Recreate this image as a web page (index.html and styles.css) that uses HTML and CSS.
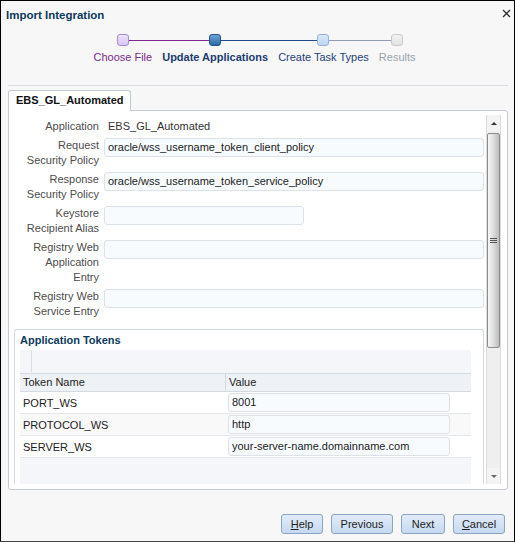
FILE: index.html
```html
<!DOCTYPE html>
<html>
<head>
<meta charset="utf-8">
<title>Import Integration</title>
<link rel="stylesheet" href="styles.css">
</head>
<body>
<div class="dialog">
  <div class="header">
    <div class="title">Import Integration</div>
    <svg class="close" width="9" height="9" viewBox="0 0 9 9"><path d="M1 1L8 8M8 1L1 8" stroke="#333" stroke-width="1.4" fill="none"/></svg>
  </div>

  <div class="train">
    <div class="step s1"><div class="node"></div><div class="slabel">Choose File</div></div>
    <div class="step s2"><div class="node"></div><div class="slabel">Update Applications</div></div>
    <div class="step s3"><div class="node"></div><div class="slabel">Create Task Types</div></div>
    <div class="step s4"><div class="node"></div><div class="slabel">Results</div></div>
  </div>

  <div class="sep"></div>

  <div class="tabs"><div class="tab">EBS_GL_Automated</div></div>

  <div class="panel">
    <div class="content">
      <div class="form">
        <div class="lbl">Application</div>
        <div class="val">EBS_GL_Automated</div>

        <div class="lbl">Request<br>Security Policy</div>
        <div><div class="input">oracle/wss_username_token_client_policy</div></div>

        <div class="lbl">Response<br>Security Policy</div>
        <div><div class="input">oracle/wss_username_token_service_policy</div></div>

        <div class="lbl">Keystore<br>Recipient Alias</div>
        <div><div class="input short"></div></div>

        <div class="lbl">Registry Web<br>Application<br>Entry</div>
        <div><div class="input"></div></div>

        <div class="lbl">Registry Web<br>Service Entry</div>
        <div><div class="input"></div></div>
      </div>

      <div class="tokens">
        <div class="tokens-title">Application Tokens</div>
        <div class="tbl">
          <div class="toolbar"><div class="tb-sep"></div></div>
          <div class="thead">
            <div class="th">Token Name</div>
            <div class="th th2">Value</div>
          </div>
          <div class="tr">
            <div class="td">PORT_WS</div>
            <div class="td2"><div class="cell-input">8001</div></div>
          </div>
          <div class="tr alt">
            <div class="td">PROTOCOL_WS</div>
            <div class="td2"><div class="cell-input">http</div></div>
          </div>
          <div class="tr">
            <div class="td">SERVER_WS</div>
            <div class="td2"><div class="cell-input">your-server-name.domainname.com</div></div>
          </div>
          <div class="filler"></div>
        </div>
      </div>
    </div>

    <div class="vscroll">
      <div class="sbtn"><span class="tri-up"></span></div>
      <div class="track">
        <div class="thumb">
          <svg width="7" height="7" viewBox="0 0 7 7"><path d="M0 1.5H7M0 3.5H7M0 5.5H7" stroke="#555" stroke-width="1" fill="none"/></svg>
        </div>
      </div>
      <div class="sbtn"><span class="tri-down"></span></div>
    </div>
  </div>

  <div class="footer">
    <button class="btn b-help"><u>H</u>elp</button>
    <button class="btn b-prev">Previous</button>
    <button class="btn b-next">Next</button>
    <button class="btn b-cancel"><u>C</u>ancel</button>
  </div>
</div>
</body>
</html>
```

FILE: styles.css
```css
html, body {
  margin: 0;
  padding: 0;
  background: #ffffff;
}

body {
  font-family: "Liberation Sans", Arial, sans-serif;
  font-size: 11px;
  color: #333;
}

.dialog {
  width: 515px;
  height: 542px;
  box-sizing: border-box;
  border: 1px solid #000;
  border-bottom-color: #444;
  background: #f7f7f7;
  display: flex;
  flex-direction: column;
  overflow: hidden;
}

/* header */
.header {
  height: 27px;
  display: flex;
  align-items: center;
  justify-content: space-between;
  padding: 0 3px 0 5px;
  flex: none;
}

.title {
  font-weight: bold;
  font-size: 11.5px;
  color: #0d3a5c;
}

.close {
  margin-top: -3px;
}

/* train */
.train {
  display: flex;
  justify-content: center;
  margin-top: 6px;
  padding-right: 6px;
  flex: none;
}

.step {
  position: relative;
  display: flex;
  flex-direction: column;
  align-items: center;
  padding: 0 5px;
}

.step::before,
.step::after {
  content: "";
  position: absolute;
  top: 6px;
  height: 1px;
}

.step::before { left: 0; right: 50%; }
.step::after { left: 50%; right: 0; }

.s1::before, .s4::after { display: none; }
.s1::after, .s2::before { background: #7d2a8c; }
.s2::after, .s3::before { background: #1c4a8a; }
.s3::after, .s4::before { background: #8e9db3; }

.node {
  position: relative;
  z-index: 1;
  width: 12px;
  height: 12px;
  box-sizing: border-box;
  border-radius: 3px;
  border: 1px solid #a78bd0;
  background: linear-gradient(#ece4fa, #d6c6f1);
}

.s2 .node {
  border-color: #1f558f;
  background: linear-gradient(#6ea3d6, #2f6aa6);
}

.s3 .node {
  border-color: #93b4d9;
  background: linear-gradient(#dbe9f8, #bcd6f2);
}

.s4 .node {
  border-color: #cacaca;
  background: linear-gradient(#f2f2f2, #e2e2e2);
}

.slabel {
  margin-top: 4px;
  line-height: 14px;
  white-space: nowrap;
}

.s1 .slabel { color: #7b2a88; }
.s2 .slabel { color: #1b3e70; font-weight: bold; }
.s3 .slabel { color: #1f3f78; }
.s4 .slabel { color: #9aa3ad; }

.sep {
  margin: 21px 6px 0 7px;
  height: 1px;
  background: #d9dde2;
  flex: none;
}

/* tabs */
.tabs {
  margin: 4px 6px 0 7px;
  display: flex;
  flex: none;
}

.tab {
  position: relative;
  z-index: 1;
  height: 21px;
  margin-bottom: -1px;
  box-sizing: border-box;
  border: 1px solid #c3cbd5;
  border-bottom: none;
  border-radius: 3px 3px 0 0;
  background: #fff;
  padding: 0 6px 0 7px;
  line-height: 19px;
  font-weight: bold;
  color: #111;
}

/* panel */
.panel {
  margin: 0 6px 0 7px;
  height: 380px;
  box-sizing: border-box;
  border: 1px solid #c3cbd5;
  border-radius: 0 3px 3px 3px;
  background: #fff;
  padding: 4px 6px 5px 0;
  display: flex;
  flex: none;
}

.content {
  flex: 1;
  overflow: hidden;
}

.form {
  display: grid;
  grid-template-columns: 90px 1fr;
  column-gap: 5px;
  row-gap: 4px;
  padding: 4px 2px 0 0;
}

.lbl {
  text-align: right;
  line-height: 15px;
  color: #4d4d4d;
}

.val {
  line-height: 15px;
  padding-left: 4px;
  color: #333;
}

.input {
  height: 19px;
  box-sizing: border-box;
  border: 1px solid #dde2e8;
  border-radius: 3px;
  background: #f7fbfe;
  padding: 0 3px;
  line-height: 17px;
  color: #222;
  white-space: nowrap;
  overflow: hidden;
}

.input.short {
  width: 200px;
}

/* tokens */
.tokens {
  margin: 10px 2px 0 5px;
  border: 1px solid #d3d9e0;
  border-bottom: none;
  border-radius: 3px 3px 0 0;
  padding: 0 12px 0 5px;
}

.tokens-title {
  height: 20px;
  line-height: 21px;
  font-weight: bold;
  color: #0d3a5c;
}

.toolbar {
  height: 23px;
  background: #f4f6f9;
}

.tb-sep {
  margin-left: 11px;
  width: 1px;
  height: 22px;
  background: #d8dde4;
}

.thead {
  display: grid;
  grid-template-columns: 205px 1fr;
  height: 19px;
  box-sizing: border-box;
  border-top: 1px solid #d5dae1;
  border-bottom: 1px solid #d5dae1;
  background: #eef1f5;
  line-height: 17px;
  color: #222;
}

.th {
  padding-left: 3px;
}

.th2 {
  border-left: 1px solid #d5dae1;
}

.tr {
  display: grid;
  grid-template-columns: 205px 1fr;
  height: 22px;
  box-sizing: border-box;
  border-bottom: 1px solid #e4e7eb;
  align-items: center;
  background: #fff;
  color: #222;
}

.tr.alt {
  background: #f9f9f9;
}

.td {
  padding-left: 3px;
}

.td2 {
  padding-left: 3px;
}

.cell-input {
  width: 222px;
  height: 19px;
  box-sizing: border-box;
  border: 1px solid #dde2e8;
  border-radius: 3px;
  background: #f7fbfe;
  padding: 0 3px;
  line-height: 17px;
  white-space: nowrap;
  overflow: hidden;
}

.filler {
  height: 60px;
  background: #f4f6f9;
}

/* scrollbar */
.vscroll {
  width: 15px;
  display: flex;
  flex-direction: column;
  background: #efefef;
  border-left: 1px solid #dcdcdc;
  border-right: 1px solid #dcdcdc;
  box-sizing: border-box;
}

.sbtn {
  height: 16px;
  display: flex;
  align-items: center;
  justify-content: center;
  background: #f4f4f4;
  flex: none;
}

.tri-up {
  width: 0;
  height: 0;
  border-left: 3px solid transparent;
  border-right: 3px solid transparent;
  border-bottom: 3px solid #333;
}

.tri-down {
  width: 0;
  height: 0;
  border-left: 3px solid transparent;
  border-right: 3px solid transparent;
  border-top: 3px solid #666;
}

.track {
  flex: 1;
  padding-top: 2px;
}

.thumb {
  height: 215px;
  box-sizing: border-box;
  border: 1px solid #8c8c8c;
  border-radius: 2px;
  background: linear-gradient(to right, #f6f6f6, #dadada 55%, #bcbcbc);
  display: flex;
  align-items: center;
  justify-content: center;
}

/* footer */
.footer {
  display: flex;
  justify-content: flex-end;
  gap: 8px;
  margin-top: 24px;
  padding-right: 9px;
  flex: none;
}

.btn {
  height: 20px;
  box-sizing: border-box;
  border: 1px solid #8ba4c4;
  border-radius: 3px;
  background: linear-gradient(#e2ecf9, #c5d9f1);
  font-family: "Liberation Sans", Arial, sans-serif;
  font-size: 11px;
  color: #1e1e1e;
  padding: 0;
  margin: 0;
  line-height: 18px;
  text-align: center;
}

.b-help { width: 42px; }
.b-prev { width: 62px; }
.b-next { width: 44px; }
.b-cancel { width: 52px; }
```
